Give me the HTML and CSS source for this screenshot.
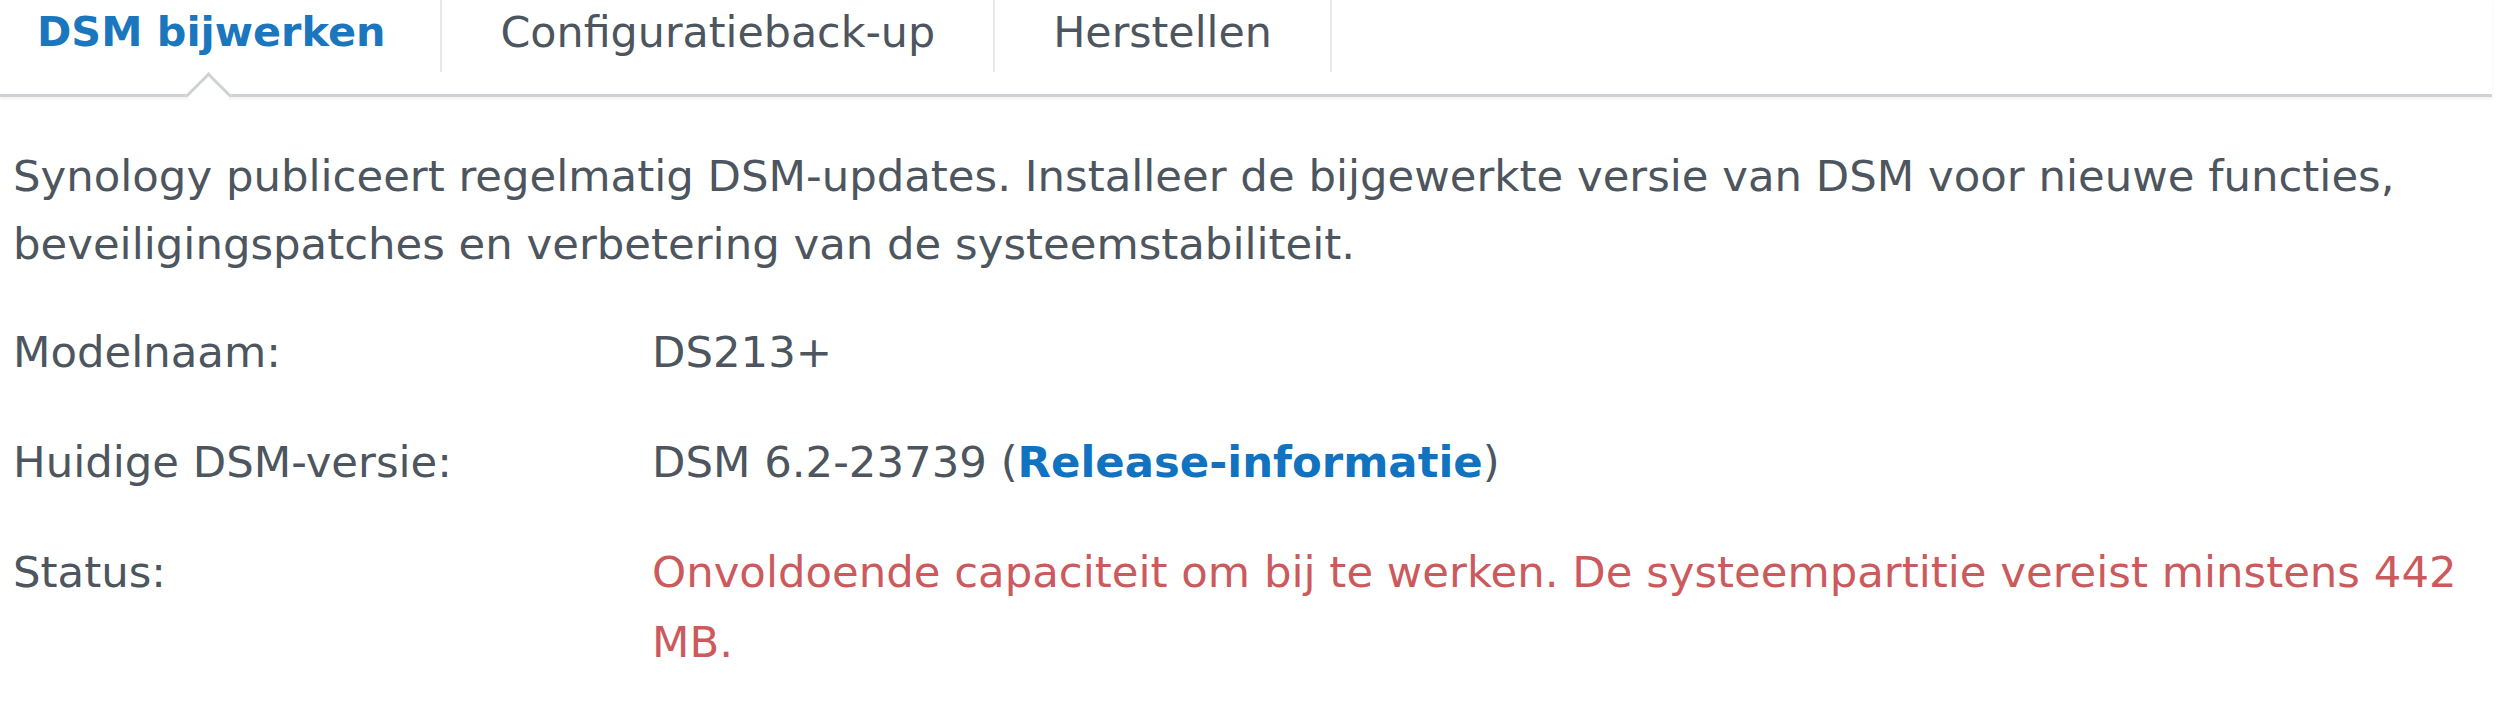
FILE: index.html
```html
<!DOCTYPE html>
<html lang="nl">
<head>
<meta charset="utf-8">
<title>DSM bijwerken</title>
<link rel="stylesheet" href="styles.css">
</head>
<body>
<div class="tabbar">
  <div class="tabs">
    <div class="tab active">DSM bijwerken</div>
    <div class="tab">Configuratieback-up</div>
    <div class="tab">Herstellen</div>
  </div>
</div>
<div class="content">
  <p class="intro">Synology publiceert regelmatig DSM-updates. Installeer de bijgewerkte versie van DSM voor nieuwe functies, beveiligingspatches en verbetering van de systeemstabiliteit.</p>
  <div class="info">
    <div class="label">Modelnaam:</div>
    <div class="value">DS213+</div>
    <div class="label">Huidige DSM-versie:</div>
    <div class="value">DSM 6.2-23739 (<a class="link" href="#">Release-informatie</a>)</div>
    <div class="label">Status:</div>
    <div class="value error">Onvoldoende capaciteit om bij te werken. De systeempartitie vereist minstens 442 MB.</div>
  </div>
</div>
</body>
</html>
```
FILE: styles.css
```css
html, body {
  margin: 0;
  padding: 0;
  background: #ffffff;
}
body {
  font-family: "DejaVu Sans", Verdana, sans-serif;
  font-size: 43.4px;
  color: #4d555e;
  width: 2508px;
  height: 724px;
  overflow: hidden;
}
.tabbar {
  position: relative;
  height: 94px;
  width: 2492px;
  border-bottom: 3px solid #cfd2d5;
  box-shadow: 0 2px 3px rgba(0,0,0,0.06);
}
.tabs {
  display: flex;
  margin-left: -21px;
  height: 72px;
}
.tab {
  position: relative;
  padding: 8px 58px 0 58px;
  font-size: 42.8px;
  line-height: 48px;
  border-right: 2px solid #e6e9ec;
  white-space: nowrap;
  color: #4d555e;
}
.tab.active {
  font-weight: bold;
  font-size: 41.4px;
  color: #1a76bd;
  padding-right: 55px;
}
.tab.active::after {
  content: "";
  position: absolute;
  left: 228px;
  bottom: -40px;
  width: 30px;
  height: 30px;
  margin-left: -15px;
  background: #ffffff;
  border-left: 3px solid #cfd2d5;
  border-top: 3px solid #cfd2d5;
  transform: rotate(45deg);
  z-index: 2;
}
.content {
  padding: 0 0 0 13px;
  position: relative;
  z-index: 3;
}
.intro {
  margin: 45px 0 0 0;
  line-height: 68px;
  width: 2440px;
}
.info {
  display: grid;
  grid-template-columns: 639px 1830px;
  row-gap: 40px;
  margin-top: 39px;
  line-height: 70px;
}
.link {
  color: #1173bf;
  font-weight: bold;
  text-decoration: none;
}
.error {
  color: #cc5a5d;
}
```
